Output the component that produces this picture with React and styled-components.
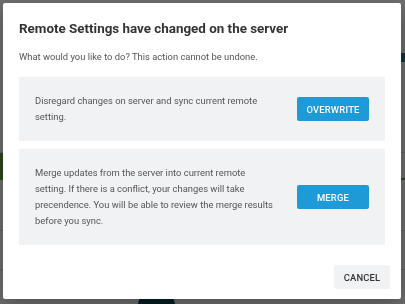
import React from 'react'
import styled, { createGlobalStyle } from 'styled-components'

const GlobalStyle = createGlobalStyle`
  html, body {
    margin: 0;
    padding: 0;
    width: 405px;
    height: 304px;
    overflow: hidden;
    font-family: Roboto, "Liberation Sans", Arial, sans-serif;
    background: #ffffff;
  }
`

const Page = styled.div`
  width: 405px;
  height: 304px;
  display: flex;
  flex-direction: column;
  background: #ffffff;
`

const PageHeader = styled.div`
  display: flex;
  justify-content: flex-end;
  height: 46px;
`

const SaveChip = styled.div`
  width: 40px;
  height: 9px;
  margin-top: 53px;
  background: #1f7f8c;
`

const PageRow = styled.div`
  display: flex;
  height: ${p => p.h}px;
  border-bottom: ${p => p.lineW || 1}px solid ${p => p.line || '#dddddd'};
`

const GreenTab = styled.div`
  width: 120px;
  background: #6aa33f;
`

const BottomFab = styled.div`
  width: 37px;
  height: 10px;
  margin: auto 0 0 138px;
  background: #0a4a52;
  border-radius: 12px 12px 0 0;
`

const Overlay = styled.div`
  position: fixed;
  inset: 0;
  background: rgba(0, 0, 0, 0.57);
  display: flex;
  padding: 3px 4px 5px 3px;
`

const Dialog = styled.div`
  width: 398px;
  height: 296px;
  background: #ffffff;
  border-radius: 2px;
  box-shadow: 0 6px 20px rgba(0, 0, 0, 0.3);
  display: flex;
  flex-direction: column;
`

const Content = styled.div`
  padding: 16px 16px 0;
  display: flex;
  flex-direction: column;
`

const Title = styled.h2`
  margin: 0;
  font-size: 13.4px;
  line-height: 20px;
  font-weight: 700;
  color: #333333;
`

const Subtitle = styled.p`
  margin: 10px 0 12px;
  font-size: 9.4px;
  line-height: 16px;
  color: #555555;
`

const Options = styled.div`
  display: flex;
  flex-direction: column;
  gap: 8px;
`

const Option = styled.div`
  display: flex;
  align-items: center;
  justify-content: space-between;
  padding: 16px;
  background: #f1f2f4;
`

const OptionText = styled.p`
  margin: 0;
  width: 242px;
  font-size: 9.4px;
  line-height: 16px;
  color: #555555;
`

const Button = styled.button`
  width: ${p => p.w || 72}px;
  height: 24px;
  border: none;
  border-radius: 2px;
  padding: 0;
  font-family: Roboto, "Liberation Sans", Arial, sans-serif;
  font-size: 9.4px;
  font-weight: 500;
  letter-spacing: 0.2px;
  text-transform: uppercase;
  cursor: pointer;
  background: ${p => (p.primary ? '#1e9ad6' : '#f1f2f4')};
  color: ${p => (p.primary ? '#ffffff' : '#333333')};
`

const Actions = styled.div`
  display: flex;
  justify-content: flex-end;
  padding: 20px 11px 10px 0;
  margin-top: auto;
`

const App = () => {
  return (
    <>
      <GlobalStyle />
      <Page>
        <PageHeader>
          <SaveChip />
        </PageHeader>
        <PageRow h={106} />
        <PageRow h={25} line="#6aa33f" lineW={2}>
          <GreenTab />
        </PageRow>
        <PageRow h={50} />
        <PageRow h={38} />
        <BottomFab />
      </Page>
      <Overlay>
        <Dialog>
          <Content>
            <Title>Remote Settings have changed on the server</Title>
            <Subtitle>What would you like to do? This action cannot be undone.</Subtitle>
            <Options>
              <Option>
                <OptionText>Disregard changes on server and sync current remote setting.</OptionText>
                <Button primary>Overwrite</Button>
              </Option>
              <Option>
                <OptionText>
                  Merge updates from the server into current remote setting. If there is a
                  conflict, your changes will take precendence. You will be able to review the
                  merge results before you sync.
                </OptionText>
                <Button primary>Merge</Button>
              </Option>
            </Options>
          </Content>
          <Actions>
            <Button w={56}>Cancel</Button>
          </Actions>
        </Dialog>
      </Overlay>
    </>
  )
}

export default App
